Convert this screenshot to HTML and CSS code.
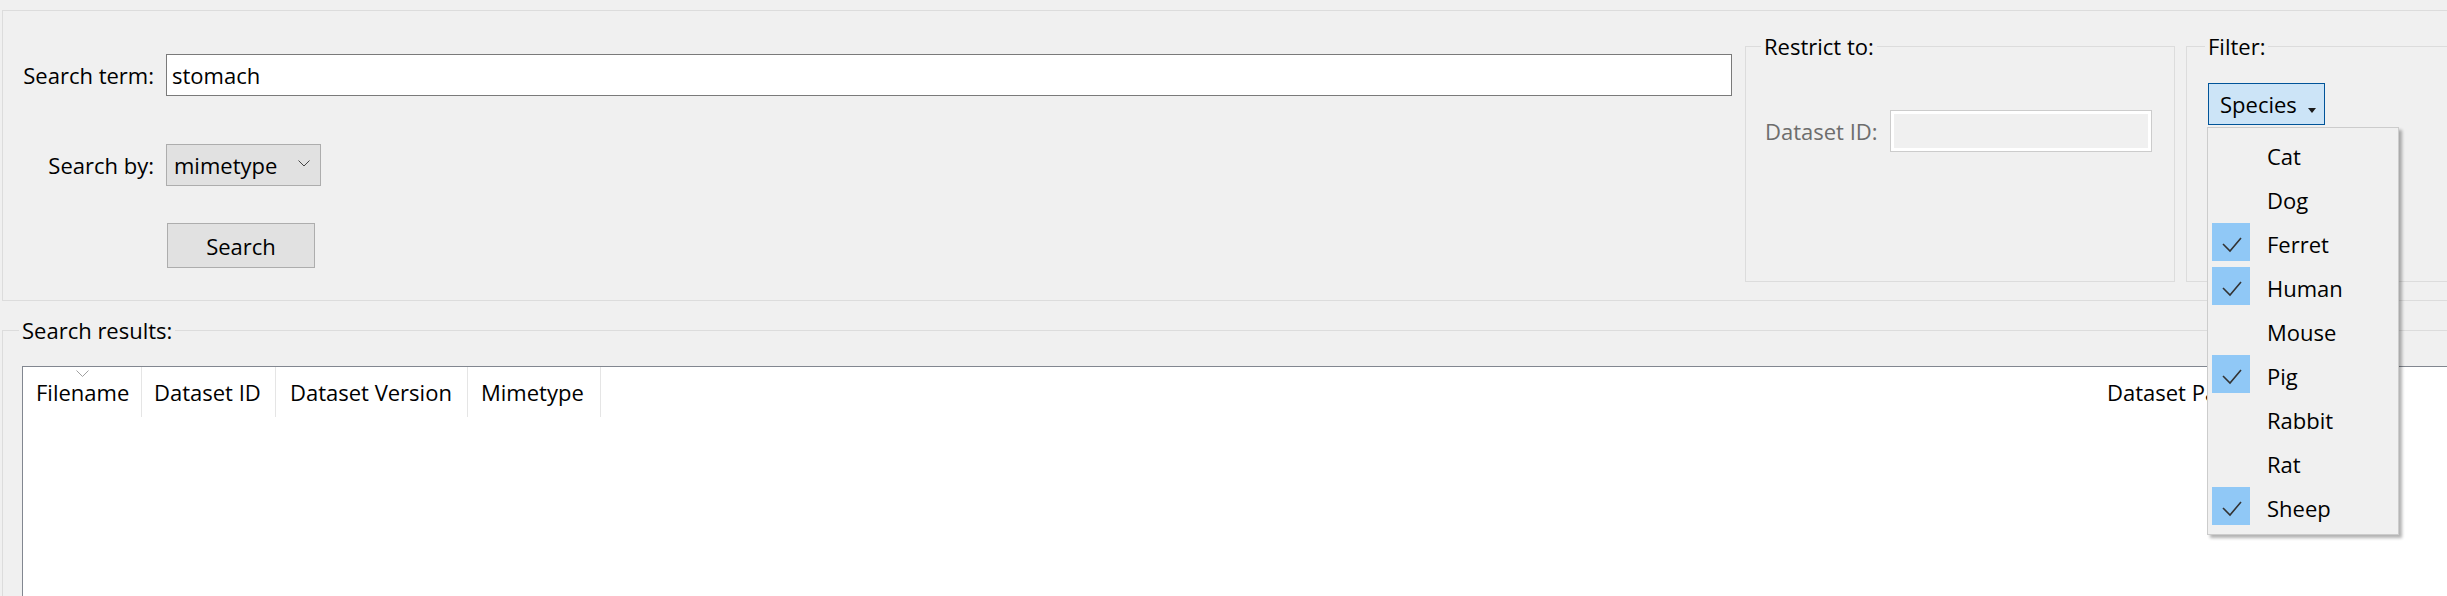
FILE: index.html
```html
<!DOCTYPE html>
<html>
<head>
<meta charset="utf-8">
<link rel="stylesheet" href="styles.css">
</head>
<body>
<div class="window">
  <section class="top-box">
    <div class="search-form">
      <div class="form-row">
        <label class="lbl-col">Search term:</label>
        <div class="text-input">stomach</div>
      </div>
      <div class="form-row row-by">
        <label class="lbl-col">Search by:</label>
        <div class="combo"><span>mimetype</span>
          <svg class="combo-chev" width="12" height="7" viewBox="0 0 12 7"><path d="M0.5 0.5 L6 6 L11.5 0.5" fill="none" stroke="#444" stroke-width="1"/></svg>
        </div>
      </div>
      <div class="form-row row-btn">
        <button class="btn">Search</button>
      </div>
    </div>
    <fieldset class="group restrict">
      <legend>Restrict to:</legend>
      <div class="restrict-row">
        <label class="disabled-lbl">Dataset ID:</label>
        <div class="disabled-input"><div class="disabled-fill"></div></div>
      </div>
    </fieldset>
    <fieldset class="group filter">
      <legend>Filter:</legend>
      <button class="species">Species<svg class="species-tri" width="8" height="5" viewBox="0 0 8 5"><path d="M0 0 H8 L4 5 Z" fill="#1a1a1a"/></svg></button>
    </fieldset>
  </section>
  <fieldset class="group results">
    <legend>Search results:</legend>
    <div class="table">
      <div class="thead">
        <div class="th c1">Filename<svg class="sort" width="13" height="7" viewBox="0 0 13 7"><path d="M0.5 0.5 L6.5 6.5 L12.5 0.5" fill="none" stroke="#a0a0a0" stroke-width="1"/></svg></div>
        <div class="th c2">Dataset ID</div>
        <div class="th c3">Dataset Version</div>
        <div class="th c4">Mimetype</div>
        <div class="th c5"></div>
        <div class="th c6">Dataset Path</div>
      </div>
    </div>
  </fieldset>

  <div class="menu">
    <div class="item"><span class="check"></span><span class="item-text">Cat</span></div>
    <div class="item"><span class="check"></span><span class="item-text">Dog</span></div>
    <div class="item"><span class="check on"><svg width="38" height="38" viewBox="0 0 38 38"><path d="M11 21 L18 28 L29 15" fill="none" stroke="#333" stroke-width="1.6"/></svg></span><span class="item-text">Ferret</span></div>
    <div class="item"><span class="check on"><svg width="38" height="38" viewBox="0 0 38 38"><path d="M11 21 L18 28 L29 15" fill="none" stroke="#333" stroke-width="1.6"/></svg></span><span class="item-text">Human</span></div>
    <div class="item"><span class="check"></span><span class="item-text">Mouse</span></div>
    <div class="item"><span class="check on"><svg width="38" height="38" viewBox="0 0 38 38"><path d="M11 21 L18 28 L29 15" fill="none" stroke="#333" stroke-width="1.6"/></svg></span><span class="item-text">Pig</span></div>
    <div class="item"><span class="check"></span><span class="item-text">Rabbit</span></div>
    <div class="item"><span class="check"></span><span class="item-text">Rat</span></div>
    <div class="item"><span class="check on"><svg width="38" height="38" viewBox="0 0 38 38"><path d="M11 21 L18 28 L29 15" fill="none" stroke="#333" stroke-width="1.6"/></svg></span><span class="item-text">Sheep</span></div>
  </div>
</div>
</body>
</html>
```
FILE: styles.css
```css
html, body {
  margin: 0;
  padding: 0;
}
body {
  background: #f0f0f0;
  font-family: "Open Sans", "Noto Sans", sans-serif;
  font-size: 22px;
  color: #000;
  width: 2447px;
  height: 596px;
  overflow: hidden;
}
.window {
  position: relative;
  width: 2447px;
  height: 596px;
  overflow: hidden;
}

/* top group */
.top-box {
  display: flex;
  align-items: flex-start;
  margin: 10px -40px 0 2px;
  height: 291px;
  box-sizing: border-box;
  border: 1px solid #dcdcdc;
}
.search-form {
  flex: none;
  width: 1729px;
  box-sizing: border-box;
  padding: 43px 0 0 19px;
  display: flex;
  flex-direction: column;
}
.form-row {
  display: flex;
  align-items: center;
}
.lbl-col {
  flex: none;
  width: 132px;
  margin-right: 12px;
  text-align: right;
  white-space: nowrap;
}
.text-input {
  flex: none;
  width: 1566px;
  height: 42px;
  box-sizing: border-box;
  border: 1px solid #7a7a7a;
  background: #fff;
  padding-left: 5px;
  line-height: 40px;
}
.row-by {
  margin-top: 48px;
}
.combo {
  flex: none;
  width: 155px;
  height: 42px;
  box-sizing: border-box;
  border: 1px solid #adadad;
  background: #e1e1e1;
  display: flex;
  align-items: center;
  justify-content: space-between;
  padding: 0 10px 0 7px;
}
.combo-chev {
  display: block;
  margin-top: -4px;
}
.row-btn {
  margin-top: 37px;
  padding-left: 145px;
}
.btn {
  width: 148px;
  height: 45px;
  box-sizing: border-box;
  border: 1px solid #adadad;
  background: #e1e1e1;
  font: inherit;
  color: #000;
  padding: 0;
}

/* group boxes */
.group {
  margin: 0;
  min-width: 0;
  box-sizing: border-box;
  border: 1px solid #dcdcdc;
  padding: 0 0 0 15px;
}
.group legend {
  padding: 0 3px;
  line-height: 30px;
  height: 30px;
}
.restrict {
  flex: none;
  margin: 20px 0 0 13px;
  width: 430px;
  height: 251px;
}
.restrict-row {
  display: flex;
  align-items: center;
  margin: 49px 0 0 4px;
}
.disabled-lbl {
  color: #6d6d6d;
  margin-right: 12px;
  white-space: nowrap;
}
.disabled-input {
  width: 262px;
  height: 42px;
  box-sizing: border-box;
  border: 1px solid #cccccc;
  background: #fff;
  padding: 3px;
}
.disabled-fill {
  width: 100%;
  height: 100%;
  background: #f0f0f0;
}
.filter {
  flex: none;
  margin: 20px 0 0 11px;
  width: 320px;
  height: 251px;
  padding-left: 18px;
}
.species {
  display: flex;
  align-items: center;
  margin: 22px 0 0 3px;
  width: 117px;
  height: 42px;
  box-sizing: border-box;
  border: 1px solid #005499;
  background: #cce4f7;
  font: inherit;
  color: #000;
  padding: 0 0 0 11px;
}
.species-tri {
  display: block;
  margin: 12px 0 0 11px;
}

/* results */
.results {
  margin: 14px -40px 0 2px;
  padding-left: 16px;
  height: 320px;
}
.table {
  margin: 21px 0 0 3px;
  border: 1px solid #828790;
  background: #fff;
  height: 300px;
}
.thead {
  display: flex;
  height: 50px;
}
.th {
  position: relative;
  flex: none;
  height: 50px;
  line-height: 50px;
  box-sizing: border-box;
  border-right: 1px solid #e5e5e5;
  white-space: nowrap;
  overflow: hidden;
}
.c1 { width: 119px; padding-left: 13px; }
.c2 { width: 134px; padding-left: 12px; }
.c3 { width: 192px; padding-left: 14px; }
.c4 { width: 133px; padding-left: 13px; }
.c5 { width: 1493px; border-right: none; }
.c6 { width: 300px; padding-left: 13px; border-right: none; }
.sort {
  position: absolute;
  left: 53px;
  top: 3px;
  display: block;
}

/* dropdown menu */
.menu {
  position: absolute;
  left: 2207px;
  top: 127px;
  width: 192px;
  height: 408px;
  box-sizing: border-box;
  border: 1px solid #cccccc;
  background: #f0f0f0;
  box-shadow: 3px 3px 3px rgba(0, 0, 0, 0.3);
  padding: 4px 0 0 4px;
}
.item {
  display: flex;
  align-items: center;
  height: 44px;
}
.item-text {
  padding-top: 3px;
}
.check {
  flex: none;
  width: 38px;
  height: 38px;
  margin-right: 17px;
}
.check svg {
  display: block;
}
.check.on {
  background: #90c8f6;
}
```
